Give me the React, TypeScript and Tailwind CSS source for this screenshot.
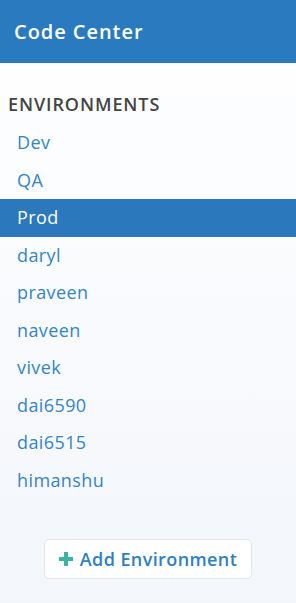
const environments = ['Dev', 'QA', 'Prod', 'daryl', 'praveen', 'naveen', 'vivek', 'dai6590', 'dai6515', 'himanshu'];

export default function App() {
  const active = 'Prod';

  return (
    <div
      className="flex h-[603px] w-[296px] flex-col bg-gradient-to-b from-white to-[#f3f6fb]"
      style={{ fontFamily: '"Open Sans", Lato, sans-serif' }}
    >
      <div className="flex h-[63px] shrink-0 items-center bg-[#2a7abf] px-[14px]">
        <h1 className="text-[20px] font-semibold tracking-[0.95px] text-white">Code Center</h1>
      </div>

      <div className="pt-[28px]">
        <h2 className="px-2 text-[18px] font-semibold tracking-[0.9px] text-[#444]">ENVIRONMENTS</h2>
        <ul className="mt-[6px]">
          {environments.map((env) => (
            <li
              key={env}
              className={
                env === active
                  ? 'flex h-[37.5px] items-center bg-[#2b78bd] px-[17px] text-[18px] tracking-[0.4px] text-white'
                  : 'flex h-[37.5px] items-center px-[17px] text-[18px] tracking-[0.4px] text-[#3584c6]'
              }
            >
              {env}
            </li>
          ))}
        </ul>
      </div>

      <div className="mt-[40px] flex justify-center">
        <button className="flex h-[40px] w-[208px] items-center justify-center gap-[7px] rounded-[5px] border border-[#e1e6ee] bg-white text-[18px] font-semibold tracking-[0.4px] text-[#2f7fc1]">
          <span className="relative inline-block h-[14px] w-[14px]">
            <span className="absolute left-0 top-[5px] h-[4px] w-[14px] bg-[#3bb3a0]" />
            <span className="absolute left-[5px] top-0 h-[14px] w-[4px] bg-[#3bb3a0]" />
          </span>
          Add Environment
        </button>
      </div>
    </div>
  );
}
